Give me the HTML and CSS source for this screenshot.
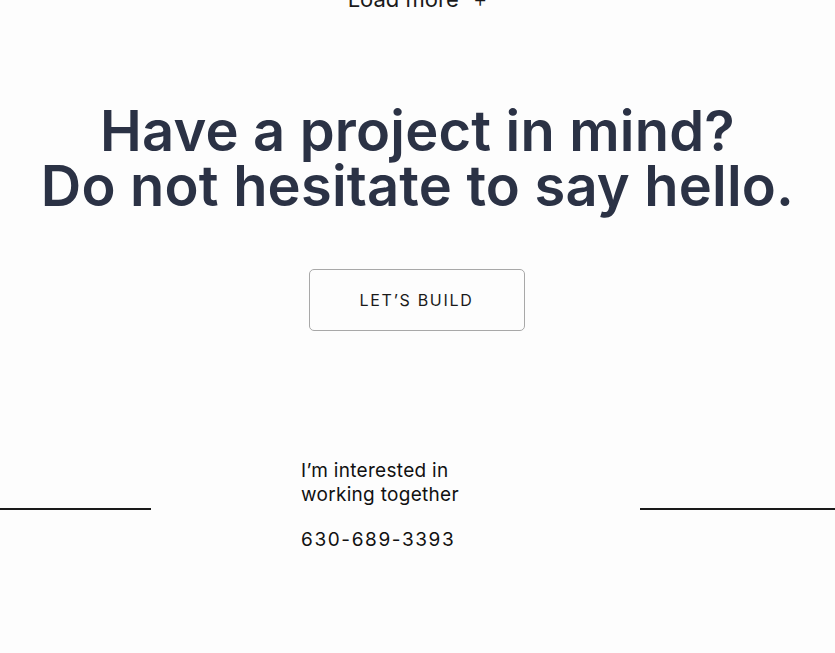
FILE: index.html
```html
<!DOCTYPE html>
<html lang="en">
<head>
    <meta charset="UTF-8">
    <meta name="viewport" content="width=device-width, initial-scale=1.0">
    <title>Contact</title>
    <link rel="stylesheet" href="styles.css">
</head>
<body>
    <div class="load-more">Load more <span class="plus">+</span></div>

    <!-- Call to action -->
    <section class="cta">
        <h2>Have a project in mind?<br>Do not hesitate to say hello.</h2>
        <a class="btn" href="#">LET’S BUILD</a>
    </section>

    <!-- Contact footer -->
    <footer class="contact">
        <div class="rule"></div>
        <div class="contact-info">
            <p>I’m interested in<br>working together</p>
            <p class="phone">630-689-3393</p>
        </div>
        <div class="rule"></div>
    </footer>
</body>
</html>
```

FILE: styles.css
```css
body {
    font-family: Inter, "Noto Sans", sans-serif;
    background-color: #fdfdfd;
    color: #111;
    margin: 0;
    padding: 0;
}
.load-more {
    text-align: center;
    font-size: 22px;
    line-height: 22px;
    margin-top: -12px;
    color: #1a1a1a;
}
.load-more .plus {
    font-weight: 300;
    margin-left: 8px;
}
.cta {
    text-align: center;
    padding-top: 94px;
}
.cta h2 {
    margin: 0;
    font-size: 56px;
    line-height: 55px;
    font-weight: 600;
    color: #2b3245;
    letter-spacing: 0.2px;
}
.btn {
    display: inline-flex;
    align-items: center;
    justify-content: center;
    width: 214px;
    height: 60px;
    margin-top: 55px;
    margin-right: 2px;
    border: 1.5px solid #a8a8a8;
    border-radius: 5px;
    color: #1a1a1a;
    text-decoration: none;
    font-size: 16px;
    letter-spacing: 1.7px;
}
.contact {
    display: grid;
    grid-template-columns: 151px 1fr 195px;
    margin-top: 128px;
}
.rule {
    height: 2px;
    background-color: #1a1a1a;
    margin-top: 49px;
}
.contact-info {
    padding-left: 150px;
    font-size: 19px;
    line-height: 24px;
    letter-spacing: 0.3px;
}
.contact-info p {
    margin: 0;
}
.contact-info .phone {
    margin-top: 21px;
    letter-spacing: 1.6px;
}
```
